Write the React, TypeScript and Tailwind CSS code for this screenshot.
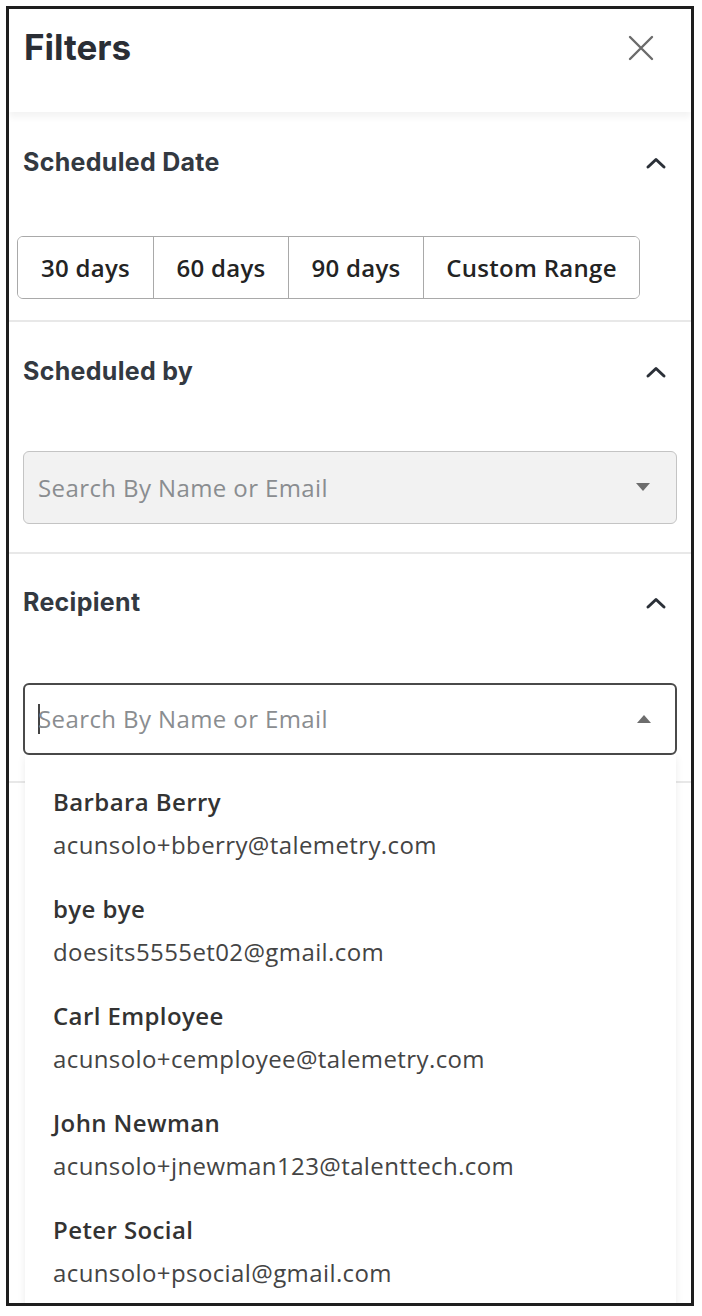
import { useState } from "react";

type Person = {
    name: string;
    email: string;
}

const people: Person[] = [
    { name: "Barbara Berry", email: "acunsolo+bberry@talemetry.com" },
    { name: "bye bye", email: "doesits5555et02@gmail.com" },
    { name: "Carl Employee", email: "acunsolo+cemployee@talemetry.com" },
    { name: "John Newman", email: "acunsolo+jnewman123@talenttech.com" },
    { name: "Peter Social", email: "acunsolo+psocial@gmail.com" },
]

const ranges = ["30 days", "60 days", "90 days", "Custom Range"]

function ChevronUp() {
    return (
        <svg width="22" height="14" viewBox="0 0 22 14" fill="none">
            <polyline points="3,11 11,3.5 19,11" stroke="#2b3038" strokeWidth="3" strokeLinecap="round" strokeLinejoin="round" />
        </svg>
    )
}

function SectionTitle({ title }: { title: string }) {
    return (
        <div className="flex items-center justify-between h-[24px] pl-[14px] pr-[24px]">
            <span className="text-[25px] font-bold text-[#333941] tracking-[0.3px]" style={{ fontFamily: "Inter, 'Noto Sans', sans-serif" }}>{title}</span>
            <ChevronUp />
        </div>
    )
}

export default function App() {
    const [range, setRange] = useState<string | null>(null)

    return (
        <div className="w-[702px] h-[1316px] bg-white pt-[6px] pl-[6px] pr-[8px] pb-[10px]" style={{ fontFamily: "'Open Sans', sans-serif" }}>
            <div className="h-full border-[3px] border-[#1e1e1e] bg-white flex flex-col overflow-hidden">
                <div className="relative z-10 h-[103px] shrink-0 flex items-start justify-between pl-[15px] pr-[36px] pt-[16px] shadow-[0_5px_7px_rgba(0,0,0,0.05)]">
                    <h1 className="text-[35px] font-bold text-[#2a2e35] leading-[44px]" style={{ fontFamily: "Inter, 'Noto Sans', sans-serif" }}>Filters</h1>
                    <svg width="28" height="28" viewBox="0 0 28 28" className="mt-[9px]">
                        <path d="M3 3 L25 25 M25 3 L3 25" stroke="#6b6b6b" strokeWidth="2.4" strokeLinecap="round" />
                    </svg>
                </div>

                <div className="pt-[39px] pb-[21px] border-b-[2px] border-[#e8e8e8]">
                    <SectionTitle title="Scheduled Date" />
                    <div className="mt-[61px] ml-[8px] flex w-[623px] h-[63px] border border-[#a9a9a9] rounded-[6px] overflow-hidden">
                        {ranges.map((r, i) => (
                            <button
                                key={r}
                                onClick={() => setRange(r)}
                                className={`h-full flex items-center justify-center text-[24px] font-semibold tracking-[0.3px] text-[#232323] ${i > 0 ? "border-l border-[#a9a9a9]" : ""} ${i === 3 ? "flex-1" : "w-[135px]"} ${range === r ? "bg-[#f0f0f0]" : "bg-white"}`}
                            >
                                {r}
                            </button>
                        ))}
                    </div>
                </div>

                <div className="pt-[38px] pb-[28px] border-b-[2px] border-[#e8e8e8]">
                    <SectionTitle title="Scheduled by" />
                    <div className="mt-[67px] mx-[14px] h-[73px] bg-[#f2f2f2] border-[1.5px] border-[#c4c4c4] rounded-[6px] flex items-center justify-between pl-[14px] pr-[26px]">
                        <span className="text-[24px] text-[#8a8d90] tracking-[0.4px]">Search By Name or Email</span>
                        <svg width="14" height="9" viewBox="0 0 14 9"><path d="M0 0 H14 L7 8 Z" fill="#6d6d6d" /></svg>
                    </div>
                </div>

                <div className="relative pt-[37px] pb-[26px] border-b-[2px] border-[#e8e8e8]">
                    <SectionTitle title="Recipient" />
                    <div className="relative mt-[68px] mx-[14px]">
                        <div className="h-[72px] border-[2px] border-[#4a4a4a] rounded-[6px] flex items-center justify-between pl-[13px] pr-[24px]">
                            <span className="flex items-center text-[24px] text-[#8a8d90] tracking-[0.4px]">
                                <span className="inline-block w-[2px] h-[30px] bg-[#444] mr-[-2px]"></span>
                                Search By Name or Email
                            </span>
                            <svg width="14" height="9" viewBox="0 0 14 9"><path d="M0 8 H14 L7 0 Z" fill="#6d6d6d" /></svg>
                        </div>
                        <ul className="absolute left-[2px] right-[1px] top-[72px] h-[560px] bg-white shadow-[0_2px_8px_rgba(0,0,0,0.08)] pt-[32px] pl-[28px] flex flex-col gap-[34px]">
                            {people.map((p) => (
                                <li key={p.email} className="flex flex-col">
                                    <span className="text-[24px] font-semibold leading-[30px] text-[#333333] tracking-[0.4px]">{p.name}</span>
                                    <span className="mt-[13px] text-[24px] leading-[30px] text-[#444444] tracking-[0.4px]">{p.email}</span>
                                </li>
                            ))}
                        </ul>
                    </div>
                </div>
            </div>
        </div>
    )
}
